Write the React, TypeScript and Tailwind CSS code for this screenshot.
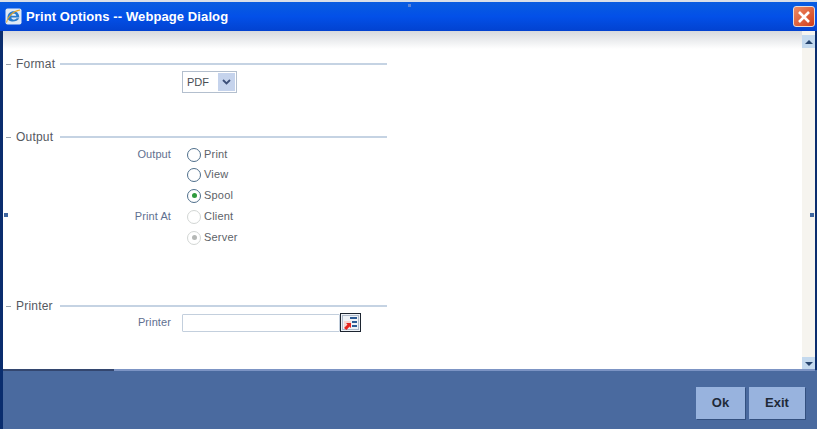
const sans = "font-['Liberation_Sans',Arial,sans-serif]";

function Section({ title }: { title: string }) {
  return (
    <div className="flex h-4 items-center">
      <span className="ml-[3px] h-px w-[5px] bg-[#9aa3ad]" />
      <span className="ml-[5px] w-[39px] text-[12px] leading-4 font-medium tracking-[0.2px] whitespace-nowrap text-[#55595f]">{title}</span>
      <span className="ml-[5px] h-[2px] w-[327px] bg-[#c5d3e3]" />
    </div>
  );
}

function Radio({ label, checked, disabled }: { label: string; checked?: boolean; disabled?: boolean }) {
  return (
    <div className="flex h-[21px] items-center">
      <span
        className={`flex h-[14px] w-[14px] items-center justify-center rounded-full border bg-white ${
          disabled ? "border-[#d2d6d4]" : "border-[#4f6f8c]"
        }`}
      >
        {checked && <span className={`h-[5px] w-[5px] rounded-full ${disabled ? "bg-[#b5b8b6]" : "bg-[#2f9a3d]"}`} />}
      </span>
      <span className="ml-[3px] text-[11px] tracking-[0.2px] text-[#5d6268]">{label}</span>
    </div>
  );
}

function RadioRow({ label, ...radio }: { label?: string; checked?: boolean; disabled?: boolean; name: string }) {
  return (
    <div className="flex h-[21px] items-center">
      <span className="w-[170px] pr-[2px] text-right text-[11px] tracking-[0.1px] text-[#5f7090]">{label}</span>
      <span className="ml-[14px]">
        <Radio label={radio.name} checked={radio.checked} disabled={radio.disabled} />
      </span>
    </div>
  );
}

function LovIcon() {
  return (
    <svg width="21" height="19" viewBox="0 0 21 19">
      <rect x="0.5" y="0.5" width="20" height="18" fill="#eef2f7" stroke="#1c2430" />
      <rect x="2.5" y="2.5" width="16" height="14" fill="none" stroke="#6c7f99" strokeDasharray="1 1" />
      <path d="M10 4h7v2h-7zM12 8h5v2h-5zM12 12h5v2h-5z" fill="#2c5a94" />
      <path d="M4 8h7v7H4z" fill="#f6d6d2" />
      <path d="M4 15l3.5-3.5-1.5-1.5h5v5l-1.5-1.5L6.5 17z" fill="#e5231f" />
    </svg>
  );
}

function IeIcon() {
  return (
    <svg width="17" height="17" viewBox="0 0 17 17">
      <rect x="0.5" y="0.5" width="16" height="16" rx="2" fill="#dfe9f6" />
      <path
        d="M2.5 9.5C2.5 5.6 5.3 3.2 8.7 3.2c3.4 0 5.6 2.6 5.6 6.4H6.3c.2 2.4 3.8 2.8 5.4.7h2.4c-1.9 4.4-11.6 4.5-11.6-.8z"
        fill="#2a7ccc"
      />
      <path d="M6.3 7.7h4.9C10.9 5.2 6.8 5.2 6.3 7.7z" fill="#eef4fb" />
      <path d="M1.5 14.5C2.2 9 8 3 15 2" fill="none" stroke="#e9a626" strokeWidth="1.1" />
    </svg>
  );
}

export default function App() {
  return (
    <div className={`relative flex h-[429px] w-[817px] flex-col overflow-hidden bg-[#0a2d6e] ${sans}`}>
      <div className="h-[2px] bg-[#d9dfe8]" />
      {/* title bar */}
      <div className="flex h-[29px] items-center bg-gradient-to-b from-[#0a5ce0] via-[#0350e8] to-[#0242d0] pr-[2px] pl-[5px]">
        <IeIcon />
        <span className="ml-[4px] text-[13px] font-bold tracking-[0.1px] whitespace-nowrap text-white">
          Print Options -- Webpage Dialog
        </span>
        <span className="ml-auto flex h-[21px] w-[22px] items-center justify-center rounded-[3px] border border-[#e8dcd8] bg-gradient-to-br from-[#ef8a62] to-[#cf3a16]">
          <svg width="14" height="14" viewBox="0 0 14 14">
            <path d="M2 2l10 10M12 2L2 12" stroke="#fff" strokeWidth="2.6" />
          </svg>
        </span>
      </div>

      {/* content */}
      <div className="flex h-[339px] pr-[2px] pl-[3px]">
        <div className="relative w-[799px] bg-white">
          <div className="absolute inset-x-0 top-0 h-[18px] bg-gradient-to-b from-[#d6d9dd] to-white" />
          <div className="relative pt-[25px]">
            <Section title="Format" />
            <div className="-mt-[1px] ml-[179px] flex h-[22px] w-[55px] items-center border border-[#b3bfce] bg-white pr-[1px] pl-[4px]">
              <span className="flex-1 text-[11px] text-[#4a4e54]">PDF</span>
              <span className="flex h-[18px] w-[17px] items-center justify-center bg-[#c5d3ec]">
                <svg width="9" height="6" viewBox="0 0 9 6">
                  <path d="M1 1l3.5 3.5L8 1" fill="none" stroke="#3c4f78" strokeWidth="1.8" />
                </svg>
              </span>
            </div>

            <div className="mt-[36px]">
              <Section title="Output" />
            </div>
            <div className="-mt-[1px]">
              <RadioRow label="Output" name="Print" />
              <div className="-mt-[1px]">
                <RadioRow name="View" />
              </div>
              <RadioRow name="Spool" checked />
              <RadioRow label="Print At" name="Client" disabled />
              <RadioRow label="" name="Server" checked disabled />
            </div>

            <div className="mt-[50px]">
              <Section title="Printer" />
            </div>
            <div className="-mt-[1px] flex items-center">
              <span className="w-[170px] pr-[2px] text-right text-[11px] tracking-[0.1px] text-[#5f7090]">Printer</span>
              <span className="ml-[9px] h-[18px] w-[158px] rounded-[1px] border border-[#c3cfdd] bg-white" />
              <LovIcon />
            </div>
          </div>
        </div>

        {/* scrollbar */}
        <div className="flex w-[13px] flex-col justify-between bg-[#f6f4ef] pt-[4px]">
          <span className="flex h-[13px] items-center justify-center bg-[#c4d9ee]">
            <span className="h-0 w-0 border-x-[4px] border-b-[4px] border-x-transparent border-b-[#27456f]" />
          </span>
          <span className="flex h-[13px] items-center justify-center bg-[#c4d9ee]">
            <span className="h-0 w-0 border-x-[4px] border-t-[4px] border-x-transparent border-t-[#27456f]" />
          </span>
        </div>
      </div>

      {/* footer */}
      <div className="ml-[3px] flex h-[59px] gap-[4px] bg-[#4a6a9f] pt-[17px] pl-[693px]">
        <button className="h-[32px] w-[49px] bg-[#98b3de] text-[13px] font-bold text-[#1f2a38] shadow-[1px_1px_0_#33507f]">Ok</button>
        <button className="h-[32px] w-[56px] bg-[#98b3de] text-[13px] font-bold text-[#1f2a38] shadow-[1px_1px_0_#33507f]">Exit</button>
      </div>

      {/* separator + resize grips over the frame */}
      <span className="absolute top-[369px] left-[3px] h-[2px] w-[111px] bg-[#33466f]" />
      <span className="absolute top-[369px] left-[114px] h-[2px] w-[701px] bg-[#7c94c4]" />
      <span className="absolute top-[4px] left-[408px] h-[3px] w-[3px] bg-[#5a84d8]" />
      <span className="absolute top-[213px] left-[4px] h-[4px] w-[4px] bg-[#3f66a0]" />
      <span className="absolute top-[213px] left-[810px] h-[4px] w-[4px] bg-[#3f66a0]" />
    </div>
  );
}
